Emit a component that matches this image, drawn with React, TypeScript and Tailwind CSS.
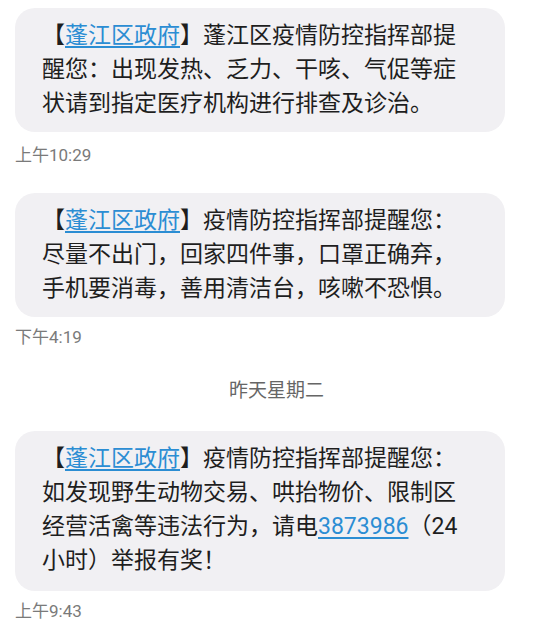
import React from "react";

const font = { fontFamily: 'Roboto, "Noto Sans CJK SC", "Noto Sans", sans-serif' };

function Link({ children }: { children: React.ReactNode }) {
  return (
    <span className="text-[#2b8dd3] underline decoration-[1.5px] underline-offset-[3px]">{children}</span>
  );
}

function Bubble({ lines, extra }: { lines: React.ReactNode[]; extra?: string }) {
  return (
    <div
      className={
        "ml-[15px] w-[490px] rounded-[20px] bg-[#f1f0f3] pl-[27px] pr-[10px] pt-[11px] text-[23px] leading-[34px] text-[#1e1e1e] " +
        (extra ?? "pb-[11px]")
      }
    >
      {lines.map((l, i) => (
        <div key={i} className="whitespace-nowrap">
          {l}
        </div>
      ))}
    </div>
  );
}

function Time({ children }: { children: React.ReactNode }) {
  return <div className="ml-[15px] text-[17px] leading-[20px] text-[#7a7a7a]">{children}</div>;
}

export default function App() {
  return (
    <div className="w-[533px] h-[622px] bg-white overflow-hidden pt-[8px]" style={font}>
      <Bubble
        lines={[
          <>
            【<Link>蓬江区政府</Link>】蓬江区疫情防控指挥部提
          </>,
          "醒您：出现发热、乏力、干咳、气促等症",
          "状请到指定医疗机构进行排查及诊治。",
        ]}
      />
      <div className="mt-[13px]">
        <Time>上午10:29</Time>
      </div>
      <div className="mt-[28px]">
        <Bubble
          lines={[
            <>
              【<Link>蓬江区政府</Link>】疫情防控指挥部提醒您：
            </>,
            "尽量不出门，回家四件事，口罩正确弃，",
            "手机要消毒，善用清洁台，咳嗽不恐惧。",
          ]}
        />
      </div>
      <div className="mt-[10px]">
        <Time>下午4:19</Time>
      </div>
      <div className="mt-[34px] pl-[20px] text-center text-[19px] leading-[20px] text-[#666666]">昨天星期二</div>
      <div className="mt-[30px]">
        <Bubble
          extra="pb-[13px]"
          lines={[
            <>
              【<Link>蓬江区政府</Link>】疫情防控指挥部提醒您：
            </>,
            "如发现野生动物交易、哄抬物价、限制区",
            <>
              经营活禽等违法行为，请电<Link>3873986</Link>（24
            </>,
            "小时）举报有奖！",
          ]}
        />
      </div>
      <div className="mt-[10px]">
        <Time>上午9:43</Time>
      </div>
    </div>
  );
}
